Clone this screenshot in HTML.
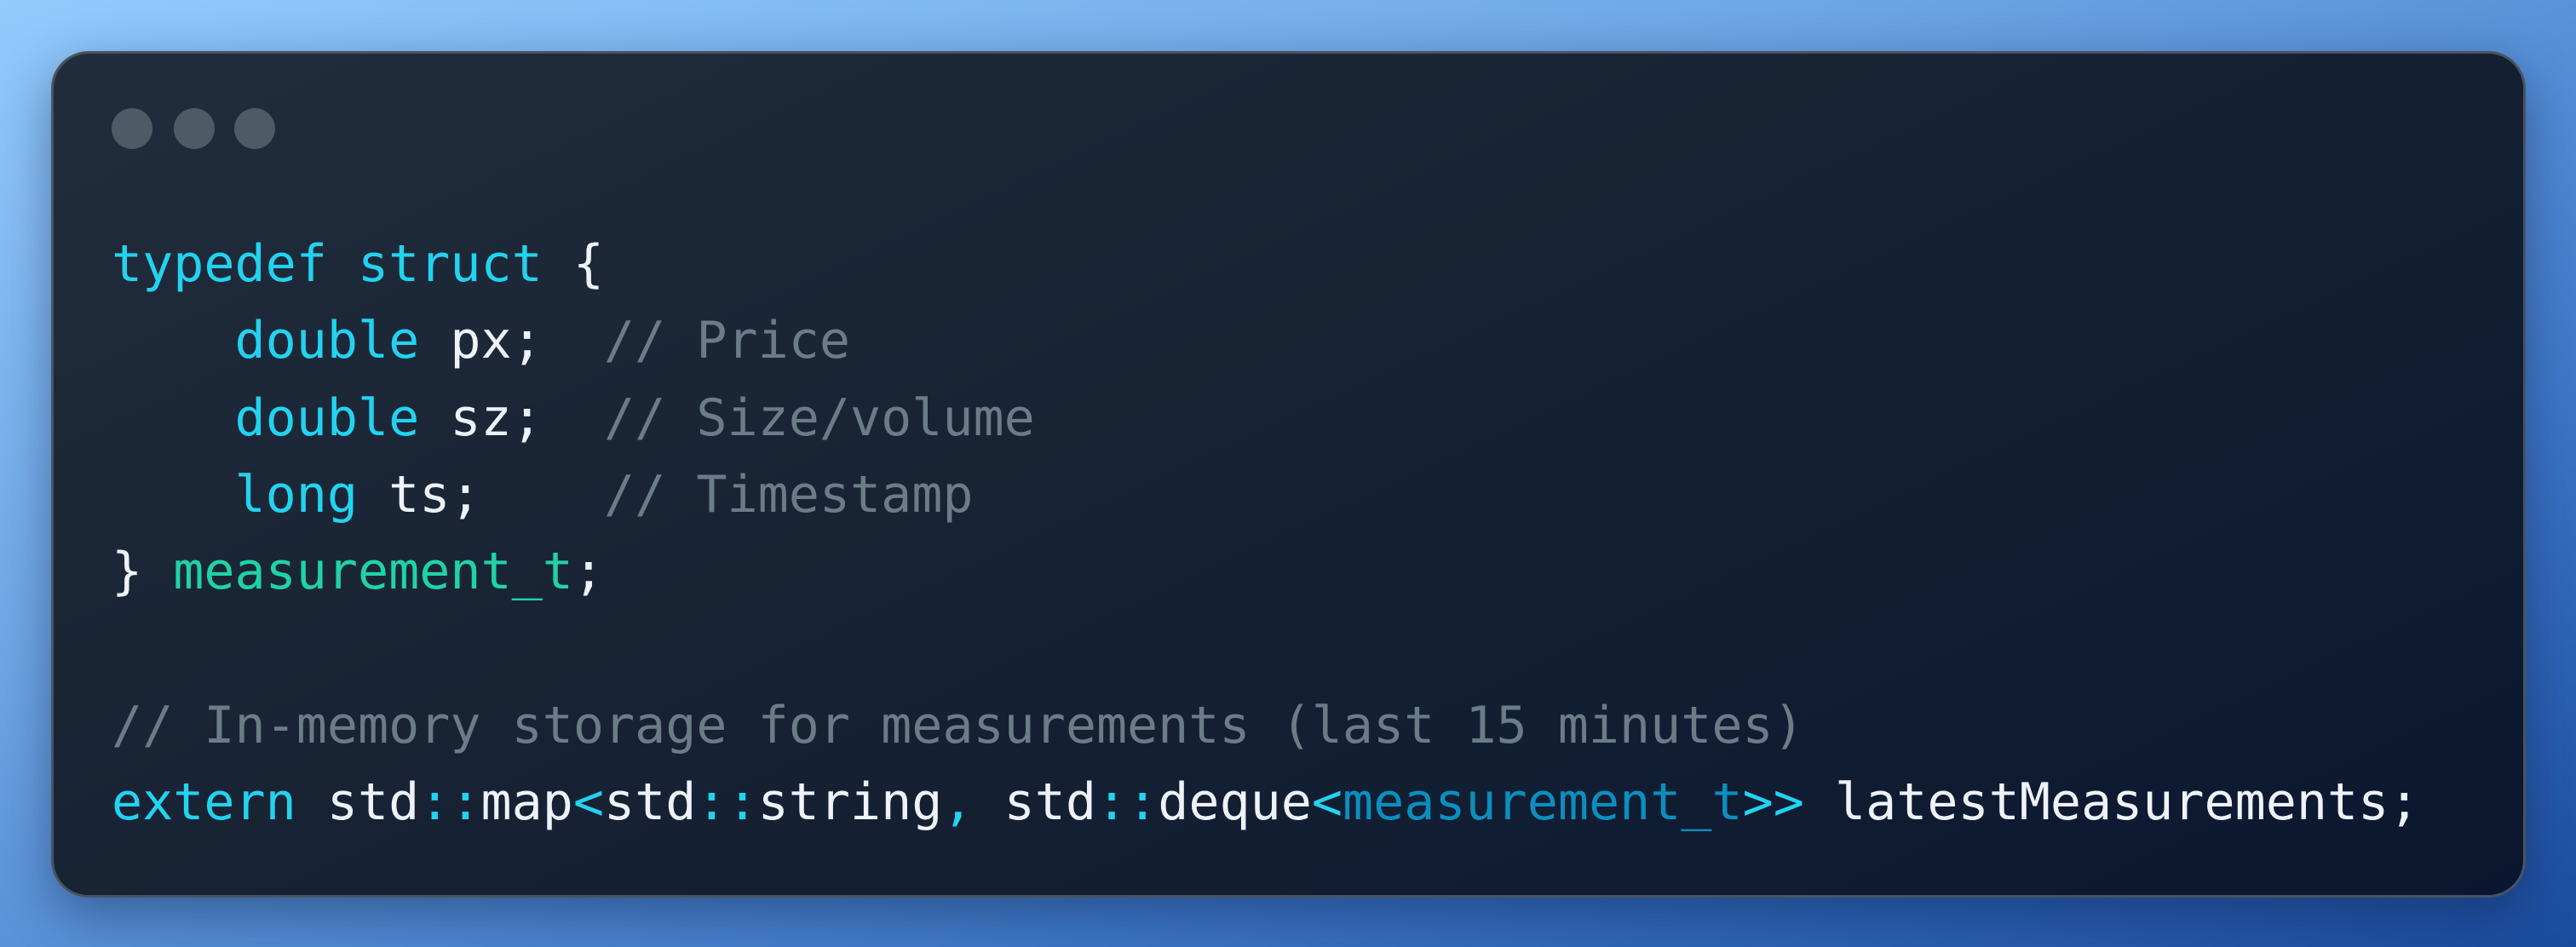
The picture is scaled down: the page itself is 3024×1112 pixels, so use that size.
<!DOCTYPE html>
<html><head><meta charset="utf-8"><style>
html,body{margin:0;padding:0}
body{width:3024px;height:1112px;overflow:hidden;background:linear-gradient(160deg,#93cbfd 0%,#6fa6e6 35%,#3f78c8 70%,#1b4c9e 100%);position:relative}
.win{position:absolute;left:60px;top:60px;width:2899px;height:988px;border-radius:44px;border:3px solid #4a5360;background:linear-gradient(155deg,#212d3c 0%,#162233 50%,#0b1730 100%);box-shadow:0 20px 60px rgba(10,30,70,.45)}
.dot{position:absolute;top:64px;width:48px;height:48px;border-radius:50%;background:#4e5a66}
pre{position:absolute;left:68px;top:202px;margin:0;font-family:"DejaVu Sans Mono","Liberation Mono",monospace;font-size:60px;line-height:90.3px;color:#eef3fa}
.k{color:#22d3f0}.c{color:#6b7c88}.g{color:#1fd3a6}.b{color:#0a8fbf}
</style></head><body>
<div class="win">
<div class="dot" style="left:68px"></div><div class="dot" style="left:141px"></div><div class="dot" style="left:212px"></div>
<pre><span class="k">typedef</span> <span class="k">struct</span> {
    <span class="k">double</span> px;  <span class="c">// Price</span>
    <span class="k">double</span> sz;  <span class="c">// Size/volume</span>
    <span class="k">long</span> ts;    <span class="c">// Timestamp</span>
} <span class="g">measurement_t</span>;

<span class="c">// In-memory storage for measurements (last 15 minutes)</span>
<span class="k">extern</span> std<span class="k">::</span>map<span class="k">&lt;</span>std<span class="k">::</span>string<span class="k">,</span> std<span class="k">::</span>deque<span class="k">&lt;</span><span class="b">measurement_t</span><span class="k">&gt;&gt;</span> latestMeasurements;</pre>
</div>
</body></html>
